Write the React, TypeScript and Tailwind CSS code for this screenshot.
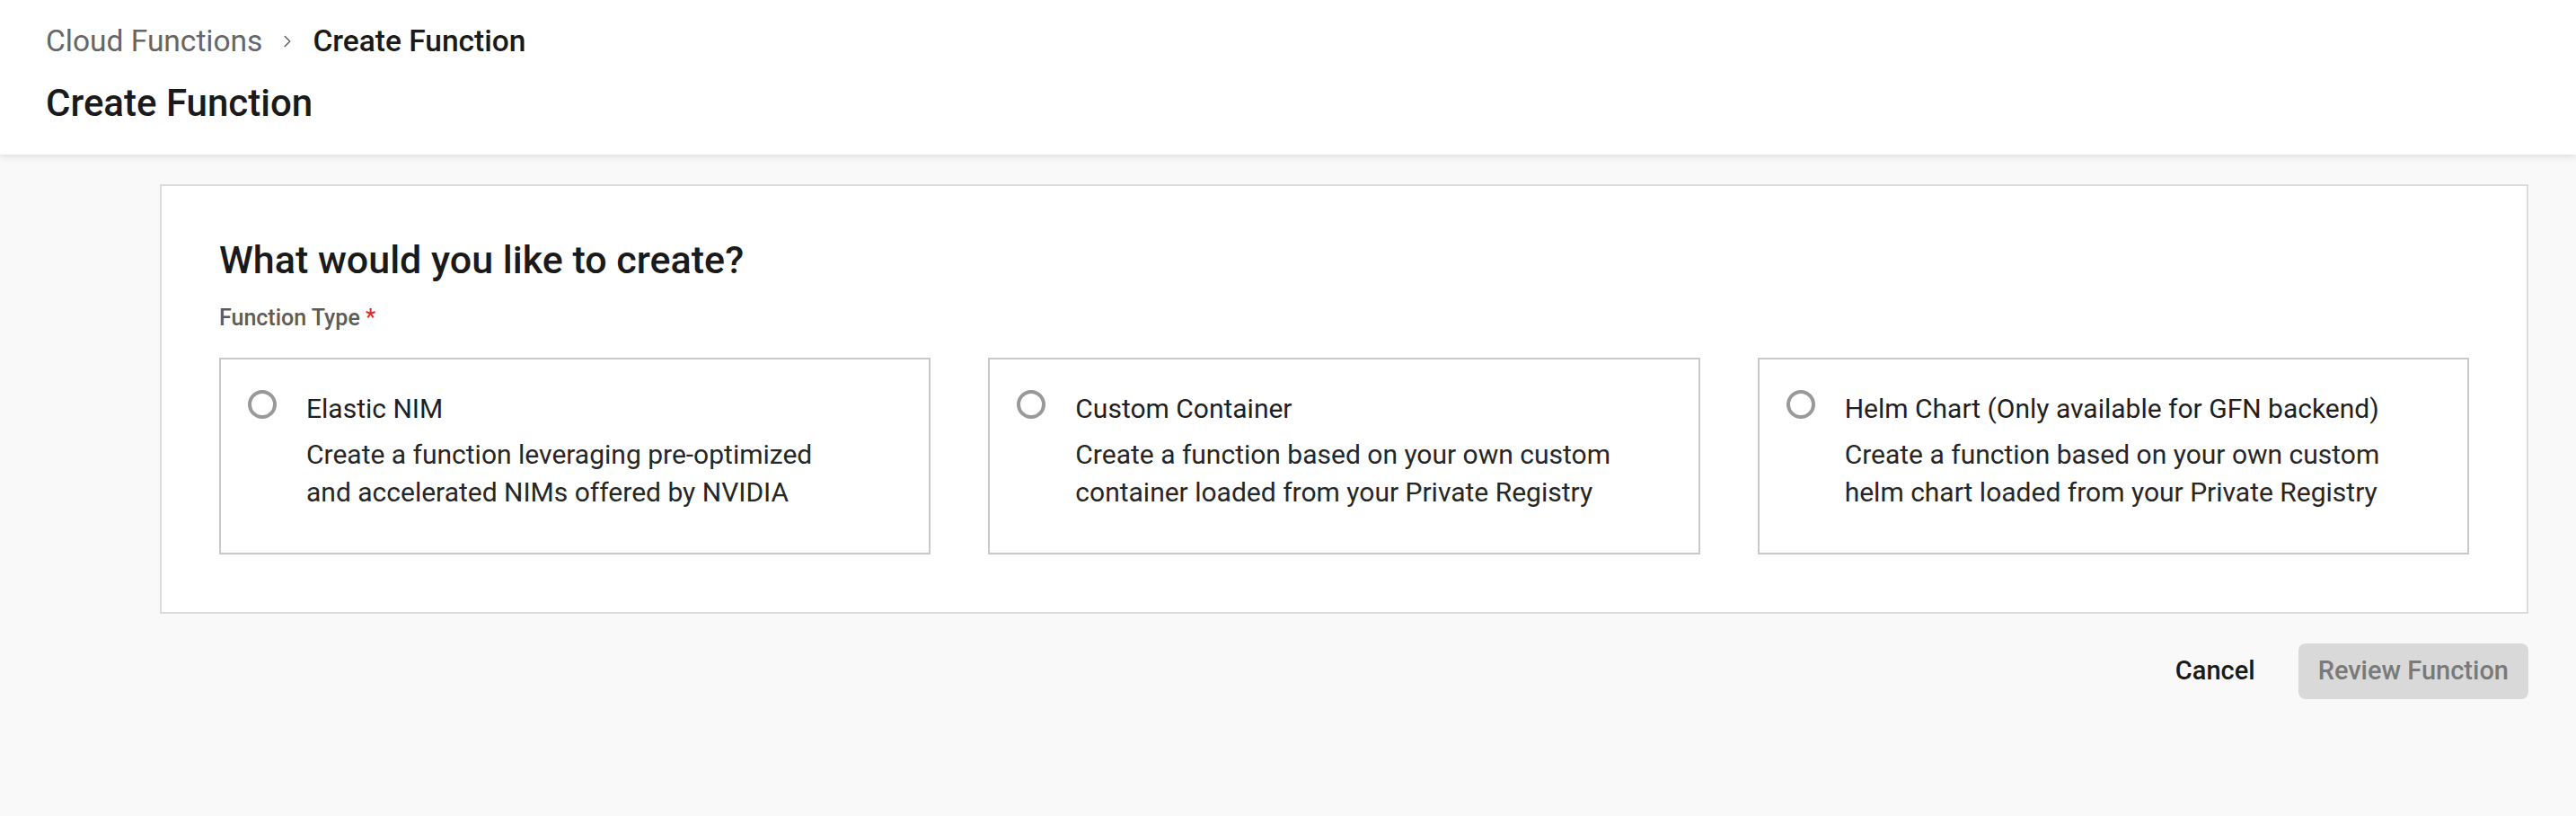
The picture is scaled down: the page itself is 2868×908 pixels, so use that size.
import { ChevronRight } from "lucide-react";

const options = [
  {
    title: "Elastic NIM",
    lines: ["Create a function leveraging pre-optimized", "and accelerated NIMs offered by NVIDIA"],
  },
  {
    title: "Custom Container",
    lines: ["Create a function based on your own custom", "container loaded from your Private Registry"],
  },
  {
    title: "Helm Chart (Only available for GFN backend)",
    lines: ["Create a function based on your own custom", "helm chart loaded from your Private Registry"],
  },
];

export default function App() {
  return (
    <div className="min-h-[908px] bg-[#f9f9f9] font-['Roboto',Arial,sans-serif] text-[#1f1f1f]">
      <header className="h-[172px] bg-white px-[51px] pt-[24px] shadow-[0_2px_8px_rgba(0,0,0,0.12)]">
        <nav className="flex items-center h-[44px] text-[33.5px]">
          <span className="text-[#666666]">Cloud Functions</span>
          <ChevronRight className="mx-[17px] w-[22px] h-[22px] text-[#666666]" strokeWidth={1.75} />
          <span className="font-medium text-[#1a1a1a]">Create Function</span>
        </nav>
        <h1 className="mt-[24px] text-[42px] leading-[46px] font-medium text-[#1a1a1a]">Create Function</h1>
      </header>

      <main className="ml-[178px] mr-[53px] pt-[33px]">
        <section className="bg-white border-2 border-[#dcdcdc] p-[64px] pt-[62px]">
          <h2 className="text-[43px] leading-[40px] font-medium text-[#1a1a1a]">What would you like to create?</h2>
          <div className="mt-[29px] text-[25px] leading-[32px] font-medium text-[#5c5c5c]">
            Function Type <span className="text-[#e02a2a]">*</span>
          </div>
          <div className="mt-[28px] grid grid-cols-3 gap-[64px]">
            {options.map((opt) => (
              <label
                key={opt.title}
                className="flex h-[219px] border-2 border-[#c9c9c9] bg-white pl-[30px] pt-[34px]"
              >
                <span className="w-[32px] h-[32px] rounded-full border-4 border-[#999999] shrink-0" />
                <div className="ml-[33px] text-[30px] text-[#1f1f1f]">
                  <div className="leading-[40px] mt-[1px]">{opt.title}</div>
                  <div className="mt-[10px] leading-[42px] text-[#262626]">
                    {opt.lines.map((l) => (
                      <div key={l}>{l}</div>
                    ))}
                  </div>
                </div>
              </label>
            ))}
          </div>
        </section>

        <div className="mt-[33px] flex justify-end items-center gap-[24px]">
          <button className="px-[24px] h-[62px] text-[29px] font-medium text-[#1a1a1a]">Cancel</button>
          <button className="px-[22px] h-[62px] rounded-[8px] bg-[#d9d9d9] text-[29px] font-medium text-[#7a7a7a]">
            Review Function
          </button>
        </div>
      </main>
    </div>
  );
}
